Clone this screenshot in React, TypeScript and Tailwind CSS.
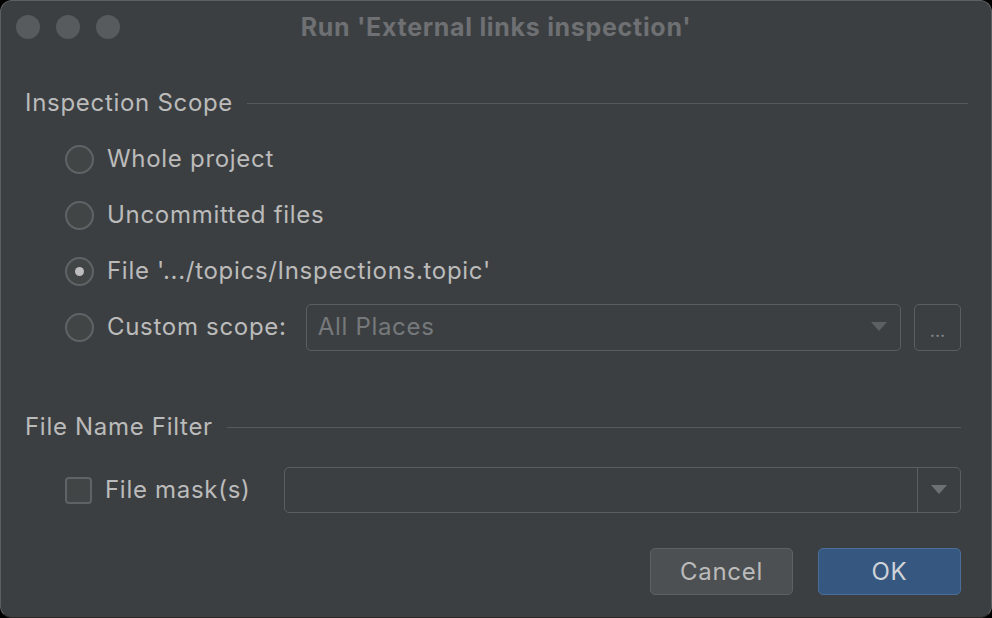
import React from 'react'

const font = { fontFamily: 'Inter, "Noto Sans", sans-serif' }

function Radio({ label, checked }: { label: string; checked?: boolean }) {
  return (
    <div className="flex items-center">
      <span className="flex h-[29px] w-[29px] items-center justify-center rounded-full border-2 border-[#606365] bg-[#414546]">
        {checked && <span className="h-[9px] w-[9px] rounded-full bg-[#bdbdbd]" />}
      </span>
      <span className="ml-[13px] text-[24px] tracking-[0.7px] text-[#bbbbbb]">{label}</span>
    </div>
  )
}

function SectionTitle({ title, lineRight }: { title: string; lineRight: string }) {
  return (
    <div className={`flex h-[30px] items-center ${lineRight}`}>
      <span className="text-[24px] tracking-[0.7px] text-[#bbbbbb]">{title}</span>
      <span className="ml-[14px] h-px flex-1 bg-[#58595b]" />
    </div>
  )
}

function Arrow({ color }: { color: string }) {
  return (
    <svg width="16" height="10" viewBox="0 0 16 10">
      <path d="M0 0 L16 0 L8 9 Z" fill={color} />
    </svg>
  )
}

export default function App() {
  return (
    <div className="h-[618px] w-[992px] bg-black" style={font}>
      <div className="flex h-full w-full flex-col overflow-hidden rounded-[12px] border border-[#5d6062] border-b-[#2a2a2a] bg-[#3c3f41]">
        <div className="relative flex h-[53px] items-center justify-center">
          <div className="absolute left-[15px] top-[14px] flex gap-[16px]">
            <span className="h-[24px] w-[24px] rounded-full bg-[#575b5e]" />
            <span className="h-[24px] w-[24px] rounded-full bg-[#575b5e]" />
            <span className="h-[24px] w-[24px] rounded-full bg-[#575b5e]" />
          </div>
          <span className="text-[25px] font-bold tracking-[0.7px] text-[#6e7073]">Run 'External links inspection'</span>
        </div>

        <div className="flex flex-col pl-[24px] pr-[30px] pt-[34px]">
          <SectionTitle title="Inspection Scope" lineRight="-mr-[7px]" />
          <div className="mt-[13px] flex flex-col pl-[40px]">
            <div className="flex h-[56px] items-center">
              <Radio label="Whole project" />
            </div>
            <div className="flex h-[56px] items-center">
              <Radio label="Uncommitted files" />
            </div>
            <div className="flex h-[56px] items-center">
              <Radio label="File '.../topics/Inspections.topic'" checked />
            </div>
            <div className="flex h-[56px] items-center">
              <Radio label="Custom scope:" />
              <div className="ml-[19px] flex h-[47px] flex-1 items-center justify-between rounded-[5px] border-[1.5px] border-[#5c5f61] pl-[11px] pr-[13px]">
                <span className="text-[24px] tracking-[0.7px] text-[#76797b]">All Places</span>
                <Arrow color="#5d6062" />
              </div>
              <div className="ml-[13px] flex h-[47px] w-[47px] items-end justify-center rounded-[5px] border-[1.5px] border-[#5c5f61] pb-[10px] text-[18px] leading-none text-[#86898b]">
                ...
              </div>
            </div>
          </div>

          <div className="mt-[57px]">
            <SectionTitle title="File Name Filter" lineRight="" />
          </div>
          <div className="mt-[25px] flex h-[46px] items-center pl-[40px]">
            <span className="h-[27px] w-[27px] rounded-[4px] border-2 border-[#606365] bg-[#414546]" />
            <span className="ml-[13px] text-[24px] tracking-[0.7px] text-[#bbbbbb]">File mask(s)</span>
            <div className="ml-[34px] flex h-[46px] flex-1 items-stretch rounded-[5px] border-[1.5px] border-[#5c5f61]">
              <div className="flex-1" />
              <div className="flex w-[43px] items-center justify-center border-l-[1.5px] border-[#5c5f61]">
                <Arrow color="#6e7173" />
              </div>
            </div>
          </div>

          <div className="mt-[35px] flex justify-end gap-[25px]">
            <button className="h-[47px] w-[143px] rounded-[5px] border-[1.5px] border-[#5e6163] bg-[#4c5052] text-[24px] tracking-[0.7px] text-[#bbbbbb]">
              Cancel
            </button>
            <button className="h-[47px] w-[143px] rounded-[5px] border-[1.5px] border-[#4b6e98] bg-[#365880] text-[24px] tracking-[0.7px] text-[#cfd3d8]">
              OK
            </button>
          </div>
        </div>
      </div>
    </div>
  )
}
